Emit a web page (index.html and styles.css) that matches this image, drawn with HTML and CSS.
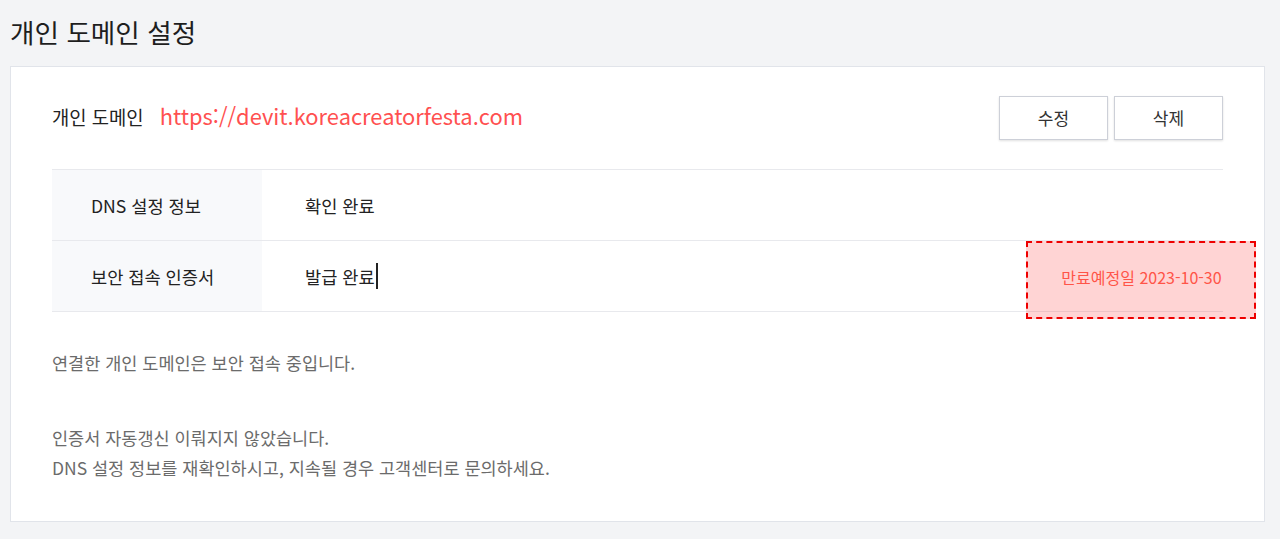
FILE: index.html
```html
<!DOCTYPE html>
<html lang="ko">
<head>
<meta charset="utf-8">
<title>개인 도메인 설정</title>
<link rel="stylesheet" href="styles.css">
</head>
<body>
<h1 class="page-title">개인 도메인 설정</h1>
<section class="card">
  <div class="domain-head">
    <span class="domain-label">개인 도메인</span>
    <span class="domain-url">https://devit.koreacreatorfesta.com</span>
    <div class="actions">
      <button class="btn">수정</button>
      <button class="btn">삭제</button>
    </div>
  </div>
  <div class="info-table">
    <div class="row">
      <div class="cell-label">DNS 설정 정보</div>
      <div class="cell-value">확인 완료</div>
    </div>
    <div class="row">
      <div class="cell-label">보안 접속 인증서</div>
      <div class="cell-value">발급 완료<span class="caret"></span></div>
      <div class="expire">만료예정일 2023-10-30</div>
    </div>
  </div>
  <div class="notes">
    <p class="note">연결한 개인 도메인은 보안 접속 중입니다.</p>
    <p class="note">인증서 자동갱신 이뤄지지 않았습니다.<br>DNS 설정 정보를 재확인하시고, 지속될 경우 고객센터로 문의하세요.</p>
  </div>
</section>
</body>
</html>
```

FILE: styles.css
```css
* { box-sizing: border-box; }
html, body { margin: 0; padding: 0; }
body {
  background: #f3f4f6;
  font-family: "Noto Sans CJK KR", "Noto Sans", sans-serif;
  color: #222;
  height: 539px;
  overflow: hidden;
}
.page-title {
  margin: 0;
  padding: 12px 0 0 10px;
  height: 66px;
  font-size: 26.6px;
  font-weight: 400;
  line-height: 40px;
  color: #1e1e1e;
}
.card {
  margin: 0 15px 0 10px;
  height: 456px;
  background: #fff;
  border: 1px solid #e1e4ea;
  padding: 29px 41px 0 41px;
}
.domain-head {
  display: flex;
  align-items: center;
  height: 74px;
  padding-bottom: 29px;
  border-bottom: 1px solid #e8e9ed;
}
.domain-label {
  font-size: 18.8px;
  color: #222;
  margin-right: 16px;
  padding-bottom: 4px;
}
.domain-url {
  font-size: 21.9px;
  color: #ff5050;
  padding-bottom: 5px;
}
.actions {
  margin-left: auto;
  display: flex;
  gap: 6px;
}
.btn {
  width: 109px;
  height: 44px;
  background: #fff;
  border: 1px solid #cdd0d8;
  box-shadow: 0 1px 2px rgba(0,0,0,0.12);
  font-family: inherit;
  font-size: 17px;
  color: #333;
  padding: 0 0 2px;
}
.info-table { display: flex; flex-direction: column; }
.row {
  position: relative;
  display: flex;
  height: 71px;
  border-bottom: 1px solid #e8e9ed;
}
.cell-label {
  width: 210px;
  background: #f8f9fb;
  padding-left: 39px;
  display: flex;
  align-items: center;
  font-size: 17.6px;
  color: #222;
}
.cell-value {
  padding-left: 43px;
  display: flex;
  align-items: center;
  font-size: 17.6px;
  color: #222;
}
.caret {
  display: inline-block;
  width: 2px;
  height: 26px;
  background: #222;
  margin-left: 1px;
}
.expire {
  position: absolute;
  top: 0;
  right: -33px;
  width: 230px;
  height: 78px;
  border: 2px dashed #ee0000;
  background: rgba(255, 40, 40, 0.2);
  display: flex;
  align-items: center;
  justify-content: center;
  padding: 0 0 7px 1px;
  font-size: 16px;
  color: #ff5448;
}
.notes { padding-top: 36px; }
.note {
  margin: 0 0 45px;
  font-size: 17.5px;
  line-height: 30px;
  color: #6b6b6b;
}
```
